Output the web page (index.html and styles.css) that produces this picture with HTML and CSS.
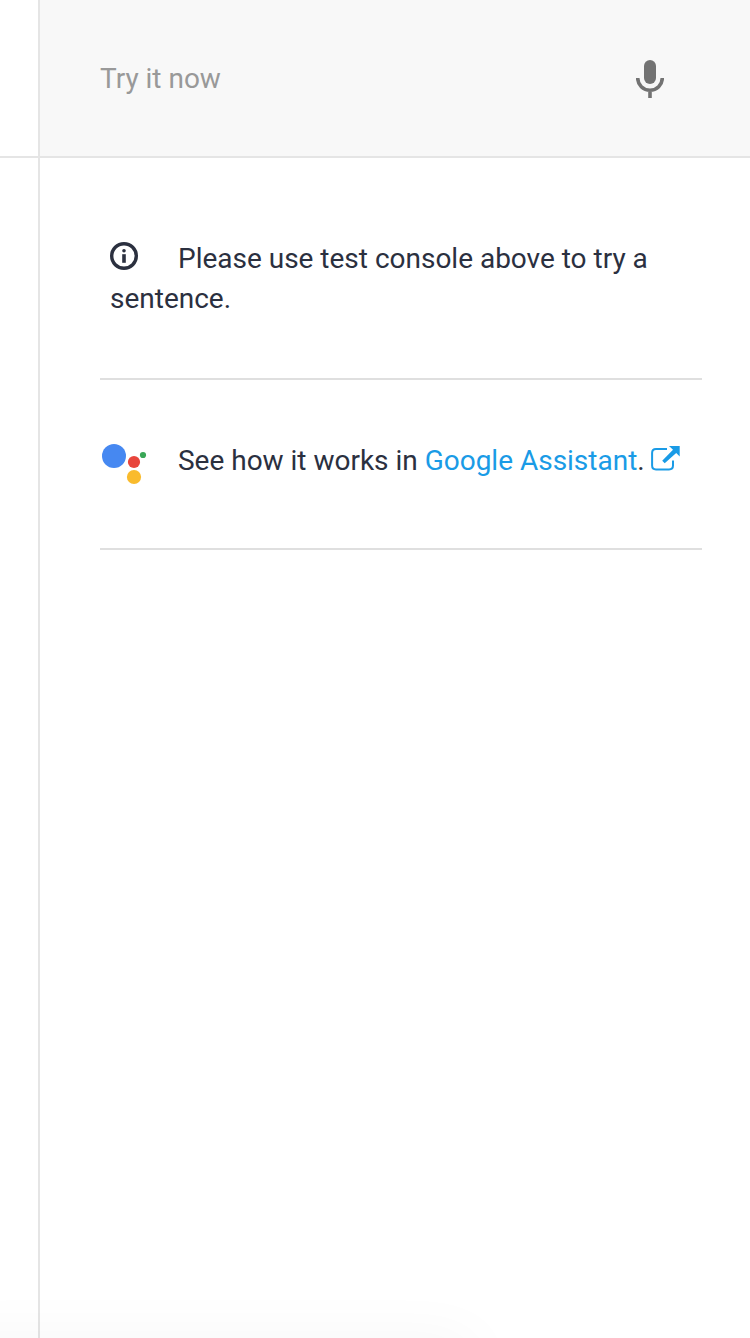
FILE: index.html
```html
<!DOCTYPE html>
<html lang="en">
<head>
<meta charset="utf-8">
<title>Test console</title>
<link rel="stylesheet" href="styles.css">
</head>
<body>
<div class="page">
  <aside class="gutter"><div class="gutter-top"></div></aside>
  <main class="console">
    <header class="query">
      <span class="query-hint">Try it now</span>
      <svg class="mic" viewBox="0 0 28 38" aria-label="Microphone">
        <rect x="8" y="0" width="12" height="24" rx="6" fill="#737373"/>
        <path d="M1.7 18a12.3 12.3 0 0 0 24.6 0M14 30v8" fill="none" stroke="#737373" stroke-width="3.6"/>
      </svg>
    </header>
    <section class="messages">
      <p class="message message-info"><svg class="info" viewBox="0 0 28 28"><circle cx="14" cy="14" r="12.3" fill="none" stroke="#2b303f" stroke-width="3.4"/><circle cx="14" cy="8.7" r="1.8" fill="#2b303f"/><path d="M14 12.2v8.6" stroke="#2b303f" stroke-width="3.6"/></svg>Please use test console above to try a sentence.</p>
      <div class="message message-assistant">
        <svg class="assistant" viewBox="0 0 46 42">
          <circle cx="12" cy="12" r="12" fill="#4688f1"/>
          <circle cx="32" cy="18" r="6.1" fill="#e8453c"/>
          <circle cx="41" cy="11" r="3.1" fill="#3aa757"/>
          <circle cx="32" cy="33" r="7.1" fill="#f9bb2d"/>
        </svg>
        <span class="assistant-text">See how it works in <a class="link" href="#">Google Assistant</a>.</span>
        <svg class="external" viewBox="0 0 29 25">
          <path d="M16 3H5Q1.1 3 1.1 7v12.5Q1.1 23.400 5 23.400h13Q22 23.400 22 19.500V14.500" fill="none" stroke="#1a9be6" stroke-width="2"/>
          <path d="M18 0h10.700v10.500l-3.500-3.500L13.700 17.300l-2.500-2.500L22 3.700z" fill="#1a9be6"/>
        </svg>
      </div>
    </section>
  </main>
  <div class="dock-shadow"></div>
</div>
</body>
</html>
```
FILE: styles.css
```css
* {
  box-sizing: border-box;
}

body {
  margin: 0;
  background: #fff;
  color: #2b303f;
  font: 28px/40px Roboto, "Liberation Sans", sans-serif;
  letter-spacing: -0.01px;
}

.page {
  position: relative;
  display: flex;
  height: 1338px;
  overflow: hidden;
}

.gutter {
  width: 40px;
  border-right: 2px solid #e5e5e5;
}

.gutter-top {
  height: 158px;
  border-bottom: 2px solid #e5e5e5;
}

.console {
  flex: 1;
}

.query {
  display: flex;
  align-items: center;
  justify-content: space-between;
  height: 158px;
  padding: 2px 86px 0 60px;
  border-bottom: 2px solid #e5e5e5;
  background: #f8f8f8;
}

.query-hint {
  color: #999;
}

.mic {
  width: 28px;
  height: 38px;
}

.messages {
  padding: 0 48px 0 60px;
}

.message {
  margin: 0;
  border-bottom: 2px solid #dfdfdf;
}

.message-info {
  padding: 81px 10px 59px;
}

.info {
  width: 28px;
  height: 28px;
  margin-right: 40px;
  vertical-align: -2px;
}

.message-assistant {
  display: flex;
  align-items: flex-start;
  padding: 60px 0 67px 2px;
  white-space: nowrap;
}

.assistant {
  flex: none;
  width: 46px;
  height: 42px;
  margin: 4px 30px -6px 0;
}

.assistant-text {
  padding-top: 1px;
}

.external {
  flex: none;
  width: 29px;
  height: 25px;
  margin: 6px 0 0 6px;
}

.link {
  color: #1a9be6;
  text-decoration: none;
}

/* Soft shadow cast by a panel docked below the viewport */
.dock-shadow {
  position: absolute;
  top: 100%;
  left: -60px;
  width: 532px;
  height: 60px;
  box-shadow: 0 0 60px rgba(0, 0, 0, 0.04);
}
```
